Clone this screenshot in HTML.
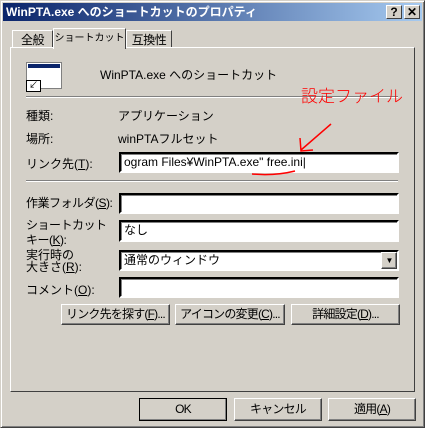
<html><head><style>
body{margin:0;width:425px;height:428px;background:#d4d0c8;font-family:"Liberation Sans","Noto Sans CJK JP",sans-serif;font-size:12px;color:#000;position:relative;overflow:hidden}
.a{position:absolute;white-space:nowrap}
.win{left:0;top:0;width:423px;height:426px;border:1px solid;border-color:#d4d0c8 #404040 #404040 #d4d0c8;box-shadow:inset 1px 1px #fff,inset -1px -1px #808080}
.title{left:3px;top:3px;width:419px;height:18px;background:linear-gradient(90deg,#0a246a,#a6caf0);color:#fff;font-weight:bold;font-size:12px;line-height:18px;padding-left:3px;box-sizing:border-box}
.tb{width:16px;height:14px;background:#d4d0c8;border:1px solid;border-color:#fff #404040 #404040 #fff;box-sizing:border-box;color:#000;font-weight:bold;text-align:center;line-height:12px;font-size:12px}
.panel{left:10px;top:47px;width:405px;height:345px;border:1px solid;border-color:#fff #404040 #404040 #fff;box-sizing:border-box}
.tab{border:1px solid;border-color:#fff #404040 transparent #fff;border-bottom:none;background:#d4d0c8;text-align:center;box-sizing:border-box;line-height:18px;letter-spacing:-0.5px}
.inp{background:#fff;border:2px inset #808080;border-color:#404040 #fff #fff #404040;box-shadow:inset 1px 1px #808080;box-sizing:border-box;padding-left:3px;line-height:16px;overflow:hidden}
.btn{border:1px solid;border-color:#fff #404040 #404040 #fff;box-shadow:inset -1px -1px #808080;box-sizing:border-box;text-align:center;line-height:19px;letter-spacing:-0.8px}
.sep{height:0;border-top:1px solid #808080;border-bottom:1px solid #fff}
</style></head><body>
<div class="a win"></div>
<div class="a title">WinPTA.exe へのショートカットのプロパティ</div>
<div class="a tb" style="left:386px;top:5px">?</div>
<div class="a tb" style="left:404px;top:5px">✕</div>
<div class="a tab" style="left:12px;top:30px;width:41px;height:18px">全般</div>
<div class="a tab" style="left:126px;top:30px;width:46px;height:18px">互換性</div>
<div class="a panel"></div>
<div class="a tab" style="left:53px;top:28px;width:73px;height:21px;line-height:20px;letter-spacing:0;font-size:10px">ショートカット</div>
<div class="a" style="left:26px;top:62px;width:36px;height:27px;background:#fff;border:1px solid #808080;box-sizing:border-box"></div>
<div class="a" style="left:28px;top:64px;width:32px;height:4px;background:#0a246a"></div>
<div class="a" style="left:26px;top:80px;width:13px;height:10px;background:#fff;border:1px solid #000;font-size:9px;line-height:8px;text-align:center">↙</div>
<div class="a" style="left:100px;top:66px">WinPTA.exe へのショートカット</div>
<div class="a sep" style="left:26px;top:96px;width:372px"></div>
<div class="a" style="left:26px;top:107px">種類:</div><div class="a" style="left:118px;top:107px">アプリケーション</div>
<div class="a" style="left:26px;top:130px">場所:</div><div class="a" style="left:118px;top:130px">winPTAフルセット</div>
<div class="a" style="left:26px;top:155px">リンク先(<u>T</u>):</div>
<div class="a inp" style="left:119px;top:152px;width:280px;height:21px">ogram Files¥WinPTA.exe" free.ini|</div>
<div class="a sep" style="left:26px;top:180px;width:372px"></div>
<div class="a" style="left:26px;top:194px;letter-spacing:-0.5px">作業フォルダ(<u>S</u>):</div>
<div class="a inp" style="left:119px;top:193px;width:280px;height:21px"></div>
<div class="a" style="left:26px;top:218px;line-height:15px;letter-spacing:-0.5px">ショートカット<br>キー(<u>K</u>):</div>
<div class="a inp" style="left:119px;top:220px;width:280px;height:22px">なし</div>
<div class="a" style="left:26px;top:249px;line-height:12px">実行時の<br>大きさ(<u>R</u>):</div>
<div class="a inp" style="left:119px;top:250px;width:280px;height:21px">通常のウィンドウ</div>
<div class="a btn" style="left:381px;top:252px;width:16px;height:17px;background:#d4d0c8;font-size:8px;line-height:15px">▼</div>
<div class="a" style="left:26px;top:281px">コメント(<u>O</u>):</div>
<div class="a inp" style="left:119px;top:277px;width:280px;height:21px"></div>
<div class="a btn" style="left:61px;top:304px;width:109px;height:21px">リンク先を探す(<u>F</u>)...</div>
<div class="a btn" style="left:175px;top:304px;width:110px;height:21px">アイコンの変更(<u>C</u>)...</div>
<div class="a btn" style="left:291px;top:304px;width:109px;height:21px">詳細設定(<u>D</u>)...</div>
<div class="a btn" style="left:139px;top:398px;width:88px;height:23px;border:1px solid #000;line-height:21px">OK</div>
<div class="a btn" style="left:234px;top:398px;width:88px;height:23px;line-height:21px">キャンセル</div>
<div class="a btn" style="left:328px;top:398px;width:88px;height:23px;line-height:21px">適用(<u>A</u>)</div>
<div class="a" style="left:301px;top:86px;color:#f00;font-size:17px;line-height:22px;letter-spacing:0px;font-weight:300">設定ファイル</div>
<svg class="a" style="left:0;top:0" width="425" height="428"><g stroke="#f00" stroke-width="1.5" fill="none"><path d="M331 124 L301 150"/><path d="M300 138 L301 151 L313 150"/><path d="M252 174 Q275 176 295 171"/></g></svg>
</body></html>
